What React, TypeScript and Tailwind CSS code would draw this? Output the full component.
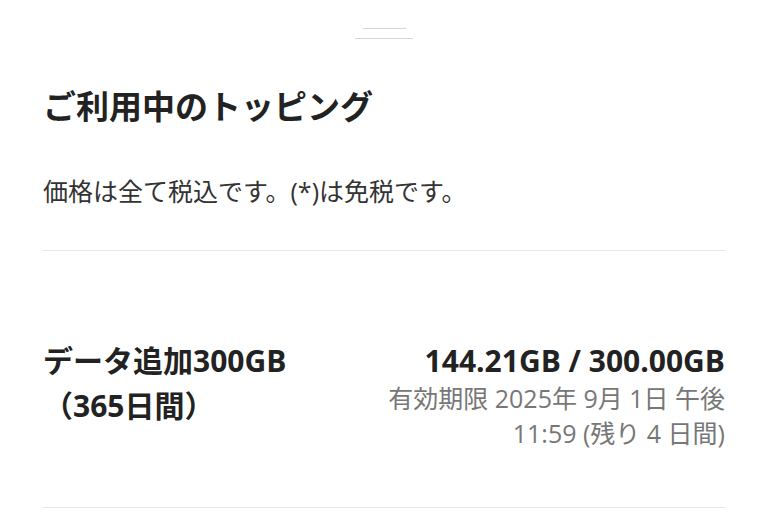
const font = { fontFamily: '"Open Sans", "Noto Sans CJK JP", sans-serif' };

function ToppingRow() {
  return (
    <div className="flex items-start justify-between pt-[89px] pb-[56px] border-b border-[#e6e6e6]">
      <div className="text-[30px] leading-[45px] font-bold text-[#222222] -mt-[2px]">
        <div>データ追加300GB</div>
        <div>（365日間）</div>
      </div>
      <div className="text-right">
        <div className="text-[30px] leading-[41px] font-bold text-[#222222]">144.21GB / 300.00GB</div>
        <div className="text-[25px] leading-[35px] text-[#777777]">
          <div>有効期限 2025年 9月 1日 午後</div>
          <div>11:59 (残り 4 日間)</div>
        </div>
      </div>
    </div>
  );
}

export default function App() {
  return (
    <div className="min-h-[518px] bg-white px-[43px]" style={font}>
      <div className="flex flex-col items-center gap-[9px] pt-[28px]">
        <div className="h-px w-[43px] bg-[#d4d4d4]" />
        <div className="h-px w-[58px] bg-[#d4d4d4]" />
      </div>
      <h1 className="mt-[48px] text-[33px] leading-[40px] font-bold text-[#222222]">ご利用中のトッピング</h1>
      <p className="mt-[48px] text-[25px] leading-[32px] text-[#333333]">価格は全て税込です。(*)は免税です。</p>
      <div className="mt-[43px] border-b border-[#e6e6e6]" />
      <ToppingRow />
    </div>
  );
}
